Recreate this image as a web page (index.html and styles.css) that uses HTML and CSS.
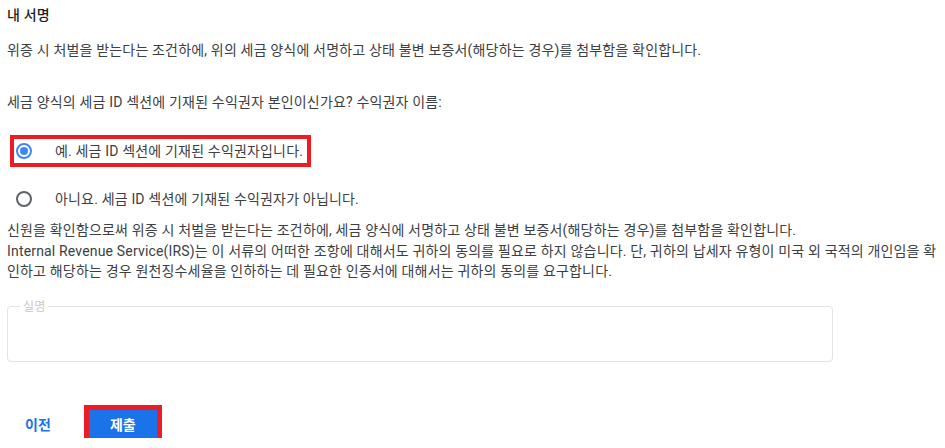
FILE: index.html
```html
<!DOCTYPE html>
<html lang="ko">
<head>
<meta charset="utf-8">
<link rel="stylesheet" href="styles.css">
</head>
<body>
<div class="page">
  <div class="title">내 서명</div>
  <p class="lead">위증 시 처벌을 받는다는 조건하에, 위의 세금 양식에 서명하고 상태 불변 보증서(해당하는 경우)를 첨부함을 확인합니다.</p>
  <p class="question">세금 양식의 세금 ID 섹션에 기재된 수익권자 본인이신가요? 수익권자 이름:</p>
  <div class="options">
    <div class="option highlight"><span class="radio checked"></span><span class="label">예. 세금 ID 섹션에 기재된 수익권자입니다.</span></div>
    <div class="option"><span class="radio"></span><span class="label">아니요. 세금 ID 섹션에 기재된 수익권자가 아닙니다.</span></div>
  </div>
  <p class="para">신원을 확인함으로써 위증 시 처벌을 받는다는 조건하에, 세금 양식에 서명하고 상태 불변 보증서(해당하는 경우)를 첨부함을 확인합니다.<br>Internal Revenue Service(IRS)는 이 서류의 어떠한 조항에 대해서도 귀하의 동의를 필요로 하지 않습니다. 단, 귀하의 납세자 유형이 미국 외 국적의 개인임을 확인하고 해당하는 경우 원천징수세율을 인하하는 데 필요한 인증서에 대해서는 귀하의 동의를 요구합니다.</p>
  <fieldset class="field"><legend>실명</legend></fieldset>
  <div class="actions">
    <button class="btn-text">이전</button>
    <button class="btn-primary highlight-btn">제출</button>
  </div>
</div>
</body>
</html>
```
FILE: styles.css
```css
html, body { margin: 0; background: #fff; }
body {
  font-family: Roboto, "Noto Sans CJK KR", sans-serif;
  font-size: 14px;
  color: #3c4043;
  letter-spacing: 0.17px;
}
.page { padding: 5px 7px 0 7px; width: 931px; }
.title { font-size: 14px; font-weight: 500; line-height: 20px; color: #202124; }
.lead { margin: 15px 0 0 0; line-height: 20px; }
.question { margin: 32px 0 0 0; line-height: 20px; }
.options { margin-top: 27px; display: flex; flex-direction: column; gap: 24px; align-items: flex-start; }
.option { display: flex; align-items: center; height: 24px; margin-left: 7px; padding: 0 4px 0 2px; }
.highlight { outline: 4px solid #ed1c24; }
.radio { width: 16px; height: 16px; box-sizing: border-box; border: 2px solid #5f6368; border-radius: 50%; display: flex; align-items: center; justify-content: center; flex: none; }
.radio.checked { border-color: #4285f4; }
.radio.checked::after { content: ""; width: 8px; height: 8px; border-radius: 50%; background: #4285f4; }
.label { margin-left: 23px; line-height: 20px; }
.para { margin: 9px 0 0 0; line-height: 20.5px; }
.field { margin: 18px 0 0 0; width: 826px; height: 62px; box-sizing: border-box; border: 1px solid #e3e3e3; border-radius: 4px; padding: 0 12px; }
.field legend { font-size: 12px; color: #c8c8c8; padding: 0 3px; line-height: 14px; }
.actions { margin-top: 48px; display: flex; align-items: center; }
.btn-text { font-family: inherit; font-size: 14px; font-weight: 700; color: #1a73e8; background: none; border: 0; padding: 0 16px; margin-left: 2px; height: 28px; letter-spacing: 0; }
.btn-primary { font-family: inherit; font-size: 14px; font-weight: 700; color: #fff; background: #1a73e8; border: 0; width: 68px; height: 28px; margin-left: 22px; padding: 0; letter-spacing: 0; }
.highlight-btn { outline: 5px solid #ed1c24; }
```
